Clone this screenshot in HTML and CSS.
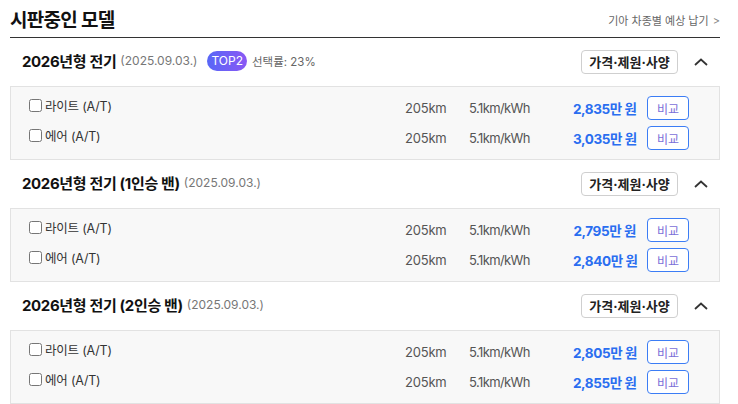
FILE: index.html
```html
<!DOCTYPE html>
<html lang="ko">
<head>
<meta charset="utf-8">
<link rel="stylesheet" href="styles.css">
</head>
<body>
<div class="wrap">
  <div class="top">
    <h2 class="title">시판중인 모델</h2>
    <a class="delivery">기아 차종별 예상 납기 <span class="gt">&gt;</span></a>
  </div>

  <section class="model">
    <div class="head">
      <div class="name"><b>2026년형 전기</b><span class="date">(2025.09.03.)</span><span class="badge">TOP2</span><span class="rate">선택률: 23%</span></div>
      <button class="spec">가격·제원·사양</button>
      <svg class="chev" width="14" height="8" viewBox="0 0 14 8"><path d="M1 7L7 1.5L13 7" fill="none" stroke="#333" stroke-width="1.8"/></svg>
    </div>
    <div class="box">
      <div class="row"><label class="trim"><input type="checkbox">라이트 (A/T)</label><span class="km">205km</span><span class="eff">5.1km/kWh</span><span class="price">2,835만 원</span><button class="cmp">비교</button></div>
      <div class="row"><label class="trim"><input type="checkbox">에어 (A/T)</label><span class="km">205km</span><span class="eff">5.1km/kWh</span><span class="price">3,035만 원</span><button class="cmp">비교</button></div>
    </div>
  </section>

  <section class="model">
    <div class="head">
      <div class="name"><b>2026년형 전기 (1인승 밴)</b><span class="date">(2025.09.03.)</span></div>
      <button class="spec">가격·제원·사양</button>
      <svg class="chev" width="14" height="8" viewBox="0 0 14 8"><path d="M1 7L7 1.5L13 7" fill="none" stroke="#333" stroke-width="1.8"/></svg>
    </div>
    <div class="box">
      <div class="row"><label class="trim"><input type="checkbox">라이트 (A/T)</label><span class="km">205km</span><span class="eff">5.1km/kWh</span><span class="price">2,795만 원</span><button class="cmp">비교</button></div>
      <div class="row"><label class="trim"><input type="checkbox">에어 (A/T)</label><span class="km">205km</span><span class="eff">5.1km/kWh</span><span class="price">2,840만 원</span><button class="cmp">비교</button></div>
    </div>
  </section>

  <section class="model">
    <div class="head">
      <div class="name"><b>2026년형 전기 (2인승 밴)</b><span class="date">(2025.09.03.)</span></div>
      <button class="spec">가격·제원·사양</button>
      <svg class="chev" width="14" height="8" viewBox="0 0 14 8"><path d="M1 7L7 1.5L13 7" fill="none" stroke="#333" stroke-width="1.8"/></svg>
    </div>
    <div class="box">
      <div class="row"><label class="trim"><input type="checkbox">라이트 (A/T)</label><span class="km">205km</span><span class="eff">5.1km/kWh</span><span class="price">2,805만 원</span><button class="cmp">비교</button></div>
      <div class="row"><label class="trim"><input type="checkbox">에어 (A/T)</label><span class="km">205km</span><span class="eff">5.1km/kWh</span><span class="price">2,855만 원</span><button class="cmp">비교</button></div>
    </div>
  </section>
</div>
</body>
</html>
```

FILE: styles.css
```css
* { box-sizing: border-box; }
html, body { margin: 0; padding: 0; background: #fff; }
body {
  font-family: Inter, "Noto Sans CJK KR", "Noto Sans", sans-serif;
  color: #222;
  overflow: hidden;
}
.wrap { width: 710px; margin-left: 10px; }

.top {
  height: 38px;
  padding-top: 4px;
  display: flex;
  align-items: center;
  justify-content: space-between;
  border-bottom: 1px solid #333;
}
.title {
  margin: 0;
  font-size: 19px;
  font-weight: 700;
  line-height: 28px;
  color: #111;
  letter-spacing: -0.7px;
}
.delivery {
  font-size: 11px;
  color: #666;
  line-height: 16px;
  text-decoration: none;
}
.gt { color: #888; margin-left: 1px; }

.head {
  height: 48px;
  display: flex;
  align-items: center;
  padding: 0 12px;
}
.name {
  flex: 1;
  display: flex;
  align-items: center;
  font-size: 15px;
  margin-top: -3px;
}
.name b { font-weight: 700; color: #111; letter-spacing: -0.35px; }
.date { margin-left: 4px; font-size: 12px; color: #777; }
.badge {
  margin-left: 10px;
  height: 20px;
  line-height: 20px;
  padding: 0 4px;
  border-radius: 10px;
  background: linear-gradient(90deg, #5867f7, #8a58f4);
  color: #fff;
  font-size: 12px;
}
.rate { margin-left: 5px; font-size: 11.5px; color: #666; }

.spec {
  height: 24px;
  width: 97px;
  padding: 0;
  border: 1px solid #cfcfcf;
  border-radius: 4px;
  background: #fff;
  font-family: inherit;
  font-size: 13px;
  font-weight: 700;
  color: #222;
  line-height: 22px;
}
.chev { margin-left: 16px; }

.box {
  background: #f8f8f8;
  border: 1px solid #e2e2e2;
  padding: 9px 30px 9px 18px;
  display: flex;
  flex-direction: column;
  gap: 6px;
}
.row {
  height: 24px;
  display: grid;
  grid-template-columns: 1fr 64px 104px 63px 53px;
  align-items: center;
}
.trim {
  align-self: start;
  margin-top: 1px;
  height: 16px;
  display: flex;
  align-items: center;
  font-size: 12.5px;
  color: #333;
  letter-spacing: -0.2px;
}
.trim input {
  margin: 0 3px 0 0;
  width: 13px;
  height: 13px;
}
.km { font-size: 13px; color: #555; letter-spacing: -0.2px; }
.eff { font-size: 13px; color: #555; letter-spacing: -0.6px; }
.price {
  text-align: right;
  font-size: 13.5px;
  font-weight: 700;
  color: #2a6ef0;
  letter-spacing: -0.4px;
  white-space: nowrap;
}
.cmp {
  justify-self: end;
  height: 24px;
  width: 42px;
  padding: 0;
  background: #fff;
  border: 1px solid #3c7df5;
  border-radius: 4px;
  font-family: inherit;
  font-size: 12px;
  color: #7b6fd8;
}
```
